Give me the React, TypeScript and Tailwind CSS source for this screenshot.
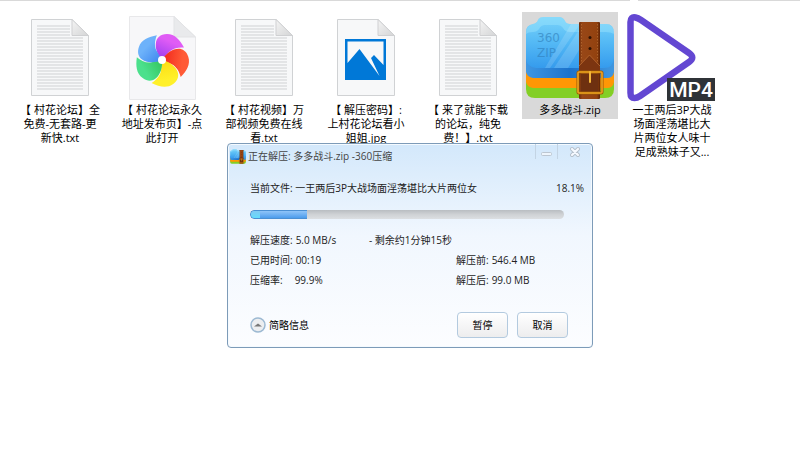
import React from 'react';

const TextFileIcon = () => <svg viewBox="0 0 96 90" className="w-24 h-[90px]" aria-hidden="true">
    <defs>
      <linearGradient id="fold" x1="0" y1="0" x2="1" y2="1">
        <stop offset="0" stopColor="#f4f4f4" />
        <stop offset="1" stopColor="#d4d5d6" />
      </linearGradient>
    </defs>
    <path d="M19.5 7.5H60L76.5 23.5V83.5H19.5Z" fill="#f7f8f9" stroke="#d0d2d4" />
    {Array.from({ length: 22 }, (_, i) => <path key={i} d={`M25 ${14 + i * 3}H${i < 4 ? 58 : 71}`} stroke="#cfd1d3" strokeWidth="1" />)}
    <path d="M60 7.5V23.5H76.5Z" fill="url(#fold)" stroke="#cfd0d2" />
  </svg>;

const petals = [{
  angle: 0,
  from: '#e05cf5',
  to: '#9a3df0'
}, {
  angle: 72,
  from: '#ff5a36',
  to: '#f0261c'
}, {
  angle: 144,
  from: '#fff02a',
  to: '#fbdc10'
}, {
  angle: 216,
  from: '#4be08c',
  to: '#33c45c'
}, {
  angle: 288,
  from: '#6db2fa',
  to: '#3d86ee'
}];

const PinwheelIcon = () => <svg viewBox="0 0 96 90" className="w-24 h-[90px]" aria-hidden="true">
    <defs>
      {petals.map(petal => <linearGradient key={petal.angle} id={`petal-${petal.angle}`} x1="0.7" y1="0" x2="0.2" y2="1">
          <stop offset="0.3" stopColor={petal.from} />
          <stop offset="1" stopColor={petal.to} />
        </linearGradient>)}
    </defs>
    <path d="M15.5 4.5H60L81.5 25V87.5H15.5Z" fill="#f7f7f9" stroke="#e8e8ea" />
    <path d="M60 4.5V25H81.5Z" fill="#e9eaec" stroke="#e2e3e5" />
    <g transform="translate(48 48)">
      {petals.map(petal => <path key={petal.angle} transform={`rotate(${petal.angle})`} d="M0 0C-9 -10 -9 -26 5 -26C13 -26 18 -20 22 -12.5C17 -13 11 -12 7 -8L0 0Z" fill={`url(#petal-${petal.angle})`} />)}
      <circle r="4" fill="#fff" />
    </g>
  </svg>;

const ImageFileIcon = () => <svg viewBox="0 0 96 90" className="w-24 h-[90px]" aria-hidden="true">
    <path d="M19.5 7.5H60L76.5 23.5V83.5H19.5Z" fill="#f7f8f9" stroke="#d0d2d4" />
    <path d="M60 7.5V23.5H76.5Z" fill="url(#fold)" stroke="#cfd0d2" />
    <rect x="27" y="27" width="41" height="41" fill="#0078d7" />
    <path d="M29.5 29.5H65.5V53L56 43L53 46L61.5 64L41.5 37L29.5 51Z" fill="#f7f8f9" />
  </svg>;

const ZipIcon = ({ className, labelled = false }: { className: string; labelled?: boolean }) => <svg viewBox="3 4 88 84" className={className} aria-hidden="true">
    <defs>
      <linearGradient id="folder" x1="0" y1="0" x2="0" y2="1">
        <stop offset="0" stopColor="#79d3fa" />
        <stop offset="0.5" stopColor="#54b9f5" />
        <stop offset="1" stopColor="#359bed" />
      </linearGradient>
      <linearGradient id="strap" x1="0" y1="0" x2="1" y2="0">
        <stop offset="0" stopColor="#6a2c0b" />
        <stop offset="0.15" stopColor="#984717" />
        <stop offset="0.85" stopColor="#93420f" />
        <stop offset="1" stopColor="#5d2407" />
      </linearGradient>
      <linearGradient id="side" x1="0" y1="0" x2="1" y2="0">
        <stop offset="0" stopColor="#3f97e3" />
        <stop offset="0.5" stopColor="#1c72cb" />
        <stop offset="1" stopColor="#4097e0" />
      </linearGradient>
    </defs>
    <path d="M3 60H91V77Q91 86 82 86H12Q3 86 3 77Z" fill="#83cf25" />
    <path d="M3 52H91V70Q90 76 84 76H10Q4 75 3 70Z" fill="#ff9705" />
    <path d="M3 42H91V60Q90 66 84 66H10Q4 65 3 60Z" fill="url(#side)" />
    <path d="M3 20Q3 13 10 12Q14 11 15 8Q16 5 21 5H36Q40 5 42 9Q43 12 47 12H83Q91 12 91 21V46Q90 56 81 56H13Q4 55 3 47Z" fill="url(#folder)" />
    <path d="M3 22Q3 13 10 12Q14 11 15 8Q16 5 21 5H36Q40 5 42 9Q43 12 47 12H83Q91 12 91 22Q88 20 82 20H47Q42 20 40 16Q38 13 34 13H22Q18 13 16 17Q14 20 10 20Q5 20 3 22Z" fill="#9ce5fd" opacity="0.45" />
    <path d="M48 12H57L27 56H22ZM60 12L31 56H45L56 38V12Z" fill="#fff" opacity="0.14" />
    {labelled && <g fill="#307db9" opacity="0.6" fontSize="12" fontFamily="DejaVu Sans, sans-serif">
        <text x="14" y="30">360</text>
        <text x="14" y="45">ZIP</text>
      </g>}
    <rect x="56" y="10" width="21" height="77" rx="1" fill="url(#strap)" />
    <path d="M58.5 12V55M74.5 12V55" stroke="#c57a3c" strokeWidth="0.6" strokeDasharray="1.5 1.5" />
    <path d="M56 54L66.5 43L77 54V60H56Z" fill="#7c3510" />
    <path d="M56 54L66.5 43L77 54" fill="none" stroke="#ba6b31" strokeWidth="0.8" />
    <circle cx="67" cy="25.5" r="1.5" fill="#2f1203" />
    <circle cx="67" cy="36.5" r="1.5" fill="#2f1203" />
    <path d="M58 62H75V80H58Z" fill="#6e3010" />
    <rect x="55" y="60" width="24" height="21" rx="1" fill="none" stroke="#9a5806" strokeWidth="3" />
    <rect x="55" y="60" width="24" height="21" rx="1" fill="none" stroke="#efa51f" strokeWidth="1.6" />
    <path d="M67 60V70" stroke="#f2b53a" strokeWidth="2" strokeLinecap="round" />
  </svg>;

const VideoIcon = () => <svg viewBox="0 0 96 90" className="w-24 h-[90px]" aria-hidden="true">
    <path d="M6.5 10Q6.5 4.5 11.5 5.5Q14 6 17 8L65 41Q71.5 45.5 65 50L16 84Q13 86 10.5 86Q6.5 86 6.5 81Z" fill="#fff" stroke="#6347d2" strokeWidth="6.5" strokeLinejoin="round" />
    <rect x="43" y="66" width="48" height="23" fill="#2f3337" />
    <text x="67" y="85" textAnchor="middle" fill="#fff" fontSize="21" fontFamily="Roboto, sans-serif" fontWeight="500">MP4</text>
  </svg>;

const files = [{
  icon: <TextFileIcon />,
  lines: ['【 村花论坛】全', '免费-无套路-更', '新快.txt']
}, {
  icon: <PinwheelIcon />,
  lines: ['【 村花论坛永久', '地址发布页】-点', '此打开']
}, {
  icon: <TextFileIcon />,
  lines: ['【 村花视频】万', '部视频免费在线', '看.txt']
}, {
  icon: <ImageFileIcon />,
  lines: ['【 解压密码】:', '上村花论坛看小', '姐姐.jpg']
}, {
  icon: <TextFileIcon />,
  lines: ['【 来了就能下载', '的论坛，纯免', '费！】.txt']
}, {
  icon: <div className="h-[90px] px-1 pt-1"><ZipIcon className="w-[88px] h-[84px]" labelled /></div>,
  lines: ['多多战斗.zip'],
  selected: true
}, {
  icon: <VideoIcon />,
  lines: ['一王两后3P大战', '场面淫荡堪比大', '片两位女人味十', '足成熟妹子又...']
}];

const FileList = () => <ul className="flex gap-1.5 pl-3 pt-[11px]">
    {files.map((file, index) => <li key={index} className={`w-24 shrink-0 self-start ${file.selected ? 'bg-[#d9d9d9] pb-0.5' : ''}`}>
        {file.icon}
        <p className="text-center text-[11px] leading-[14px] pt-px text-black whitespace-nowrap">
          {file.lines.map(line => <span key={line} className="block">{line}</span>)}
        </p>
      </li>)}
  </ul>;

const ExtractDialog = () => <section role="dialog" aria-labelledby="dialog-title" className="absolute left-[227px] top-[143px] w-[366px] rounded-[4px] border border-[#7d9bb8] bg-linear-to-b from-[#d3e8fb] via-[#f1f7fe] via-45% to-[#fcfdff] shadow-[inset_0_0_0_1px_#f4faff] text-[10px] leading-5 text-[#222]">
    <header className="flex h-[26px] items-start pl-0.5">
      <div className="flex flex-1 items-center gap-0.5 pt-0.5">
        <ZipIcon className="w-4 h-[15px]" />
        <h1 id="dialog-title" className="text-[#444]">正在解压: 多多战斗.zip -360压缩</h1>
      </div>
      <button aria-label="最小化" className="flex h-[15px] w-[23px] items-end justify-center border-x border-[#c3d4e4] pb-0.5">
        <svg viewBox="0 0 11 5" className="w-[11px] h-[5px]"><rect x="0.5" y="0.5" width="10" height="3" rx="1" fill="#eef5fc" stroke="#bcc6d1" /></svg>
      </button>
      <button aria-label="关闭" className="flex h-4 w-[34px] items-center justify-center">
        <svg viewBox="0 0 12 12" className="w-3 h-3" strokeLinecap="round">
          <path d="M3 3L9 9M9 3L3 9" stroke="#b4bfca" strokeWidth="4" />
          <path d="M3 3L9 9M9 3L3 9" stroke="#f6faff" strokeWidth="2.2" />
        </svg>
      </button>
    </header>
    <div className="pl-[22px] pr-2 pt-2">
      <div className="flex justify-between">
        <span>当前文件: 一王两后3P大战场面淫荡堪比大片两位女</span>
        <span>18.1%</span>
      </div>
      <div role="progressbar" aria-label="解压进度" aria-valuenow={18.1} className="mt-3 mr-5 h-[9px] overflow-hidden rounded-full bg-linear-to-b from-[#b9bdc1] via-[#cfd2d5] to-[#dcdfe2]">
        <div className="h-full rounded-l-full border-y border-l border-[#4a8fd3] bg-linear-to-b from-[#8fc4f8] to-[#4b9cec]" style={{ width: '18.1%' }}>
          <div className="h-full w-[9px] rounded-l-full bg-linear-to-b from-[#7fc9f3] to-[#63dcfb]"></div>
        </div>
      </div>
      <div className="grid grid-cols-[119px_87px_1fr] pt-[11px]">
        <div className="flex gap-[3px]"><span>解压速度:</span><span>5.0 MB/s</span></div>
        <div className="col-span-2">- 剩余约1分钟15秒</div>
        <div className="col-span-2 flex gap-[3px]"><span>已用时间:</span><span>00:19</span></div>
        <div className="flex gap-[3px]"><span>解压前:</span><span>546.4 MB</span></div>
        <div className="col-span-2 flex gap-3"><span>压缩率:</span><span>99.9%</span></div>
        <div className="flex gap-[3px]"><span>解压后:</span><span>99.0 MB</span></div>
      </div>
    </div>
    <footer className="flex items-center justify-between pl-[22px] pr-6 pt-[22px] pb-[9px] text-black">
      <button className="flex items-center gap-[3px]">
        <svg viewBox="0 0 16 16" className="w-4 h-4" aria-hidden="true">
          <circle cx="8" cy="8" r="7" fill="#eceef0" stroke="#9cb9d2" strokeWidth="1.5" />
          <path d="M4 9.5L8 6.5L12 9.5Z" fill="#777" />
        </svg>
        简略信息
      </button>
      <div className="flex gap-[9px]">
        <button className="h-[26px] w-[51px] rounded-[4px] border border-[#b3cadf] bg-linear-to-b from-white to-[#ededee]">暂停</button>
        <button className="h-[26px] w-[51px] rounded-[4px] border border-[#b3cadf] bg-linear-to-b from-white to-[#ededee]">取消</button>
      </div>
    </footer>
  </section>;

const App = () => {
  return <main className="relative min-h-screen overflow-hidden bg-white font-['Open_Sans','Noto_Sans_CJK_SC',sans-serif]">
      <div className="flex gap-2">
        <div className="h-px w-[630px] bg-[#d9d9d9]"></div>
        <div className="h-px flex-1 bg-[#d9d9d9]"></div>
      </div>
      <FileList />
      <ExtractDialog />
    </main>;
};
export default App;
